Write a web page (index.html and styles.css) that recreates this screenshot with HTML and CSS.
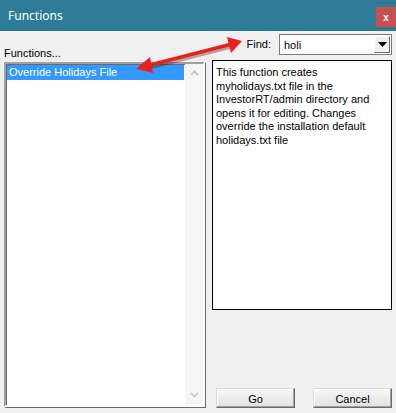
FILE: index.html
```html
<!DOCTYPE html>
<html>
<head>
  <title>Functions</title>
  <link rel="stylesheet" href="styles.css">
</head>
<body>
  <div class="window">
    <div class="titlebar">
      <span class="title">Functions</span>
      <span class="close">x</span>
    </div>

    <div class="content">
      <div class="left-head">Functions...</div>

      <div class="right-head">
        <label for="findInput">Find:</label>
        <div class="combo">
          <span class="combo-text">holi</span>
          <span class="combo-btn">
            <svg width="9" height="5" viewBox="0 0 9 5"><path d="M0 0 H9 L4.5 5 Z" fill="#000"/></svg>
          </span>
        </div>
      </div>

      <div class="listbox">
        <div class="list-items">
          <div class="item selected">Override Holidays File</div>
        </div>
        <div class="scrollbar">
          <svg width="9" height="6" viewBox="0 0 9 6"><path d="M1 5 L4.5 1.5 L8 5" fill="none" stroke="#c4c4c4" stroke-width="1.6"/></svg>
          <svg width="9" height="6" viewBox="0 0 9 6"><path d="M1 1 L4.5 4.5 L8 1" fill="none" stroke="#c4c4c4" stroke-width="1.6"/></svg>
        </div>
      </div>

      <div class="right-col">
        <div class="description">
          This function creates myholidays.txt file in the InvestorRT/admin directory and opens it for editing. Changes override the installation default holidays.txt file
        </div>
        <div class="buttons">
          <button type="button" class="btn">Go</button>
          <button type="button" class="btn">Cancel</button>
        </div>
      </div>
    </div>

    <!-- annotation arrow drawn over the dialog -->
    <svg class="arrow" width="396" height="413" viewBox="0 0 396 413">
      <g transform="translate(1.5,2)" opacity="0.35">
        <line x1="148" y1="66" x2="230" y2="45" stroke="#600" stroke-width="3"/>
      </g>
      <line x1="146" y1="66" x2="232" y2="44" stroke="#e8201e" stroke-width="3.5"/>
      <path d="M136 69 L150 57 L153 73 Z" fill="#e8201e"/>
      <path d="M242 41 L227 37 L231 53 Z" fill="#e8201e"/>
    </svg>
  </div>
</body>
</html>
```

FILE: styles.css
```css
* {
  box-sizing: border-box;
}

body {
  margin: 0;
  font-family: "Liberation Sans", Arial, sans-serif;
  font-size: 11px;
  color: #000000;
}

.window {
  position: relative;
  width: 396px;
  height: 413px;
  background-color: #f0f0f0;
  overflow: hidden;
}

.titlebar {
  height: 31px;
  background-color: #2e7b97;
  display: flex;
  align-items: center;
  justify-content: space-between;
  padding-left: 8px;
}

.title {
  font-family: "Noto Sans", sans-serif;
  font-size: 12px;
  color: #ffffff;
  margin-top: -1px;
}

.close {
  width: 20px;
  height: 20px;
  background-color: #c75050;
  color: #ffffff;
  font-weight: bold;
  font-size: 10px;
  display: flex;
  align-items: center;
  justify-content: center;
  margin-top: 3px;
}

.content {
  display: grid;
  grid-template-columns: 201px 180px;
  grid-template-rows: 28px 345px;
  column-gap: 7px;
  padding: 3px 0 0 4px;
}

.left-head {
  display: flex;
  align-items: flex-end;
  padding-bottom: 3px;
}

.right-head {
  display: flex;
  align-items: flex-start;
  justify-content: flex-end;
  gap: 8px;
}

.right-head label {
  margin-top: 4px;
}

.combo {
  width: 113px;
  height: 21px;
  background-color: #ffffff;
  border: 1px solid #7a7a7a;
  display: flex;
  align-items: center;
  justify-content: space-between;
  padding: 1px;
}

.combo-text {
  padding-left: 3px;
}

.combo-btn {
  width: 16px;
  height: 17px;
  background-color: #f0f0f0;
  border-top: 1px solid #ffffff;
  border-left: 1px solid #ffffff;
  border-right: 1px solid #696969;
  border-bottom: 1px solid #696969;
  display: flex;
  align-items: center;
  justify-content: center;
}

.listbox {
  display: flex;
  background-color: #ffffff;
  border: 2px solid;
  border-color: #a0a0a0 #ffffff #ffffff #a0a0a0;
  box-shadow: inset 1px 1px 0 #696969, 1px 1px 0 #696969;
}

.list-items {
  flex: 1;
  padding: 1px 1px 0 1px;
}

.item {
  height: 15px;
  line-height: 15px;
  padding-left: 2px;
}

.item.selected {
  background-color: #3399ff;
  color: #ffffff;
}

.scrollbar {
  width: 18px;
  background-color: #f5f5f5;
  display: flex;
  flex-direction: column;
  justify-content: space-between;
  align-items: center;
  padding: 6px 0 7px 0;
}

.right-col {
  display: flex;
  flex-direction: column;
  justify-content: space-between;
}

.description {
  height: 250px;
  margin-top: -2px;
  background-color: #ffffff;
  border: 1px solid #000000;
  padding: 5px 3px;
  line-height: 13.6px;
}

.buttons {
  display: flex;
  gap: 18px;
  padding-left: 4px;
  margin-bottom: -1px;
}

.btn {
  width: 80px;
  height: 20px;
  font-family: inherit;
  font-size: 11px;
  background: linear-gradient(#f6f6f6, #e2e2e2);
  border: 1px solid;
  border-color: #dcdcdc #696969 #696969 #dcdcdc;
  box-shadow: inset -1px -1px 0 #a0a0a0, inset 1px 1px 0 #ffffff;
  padding: 1px 0 0 0;
}

.arrow {
  position: absolute;
  left: 0;
  top: 0;
  pointer-events: none;
}
```
